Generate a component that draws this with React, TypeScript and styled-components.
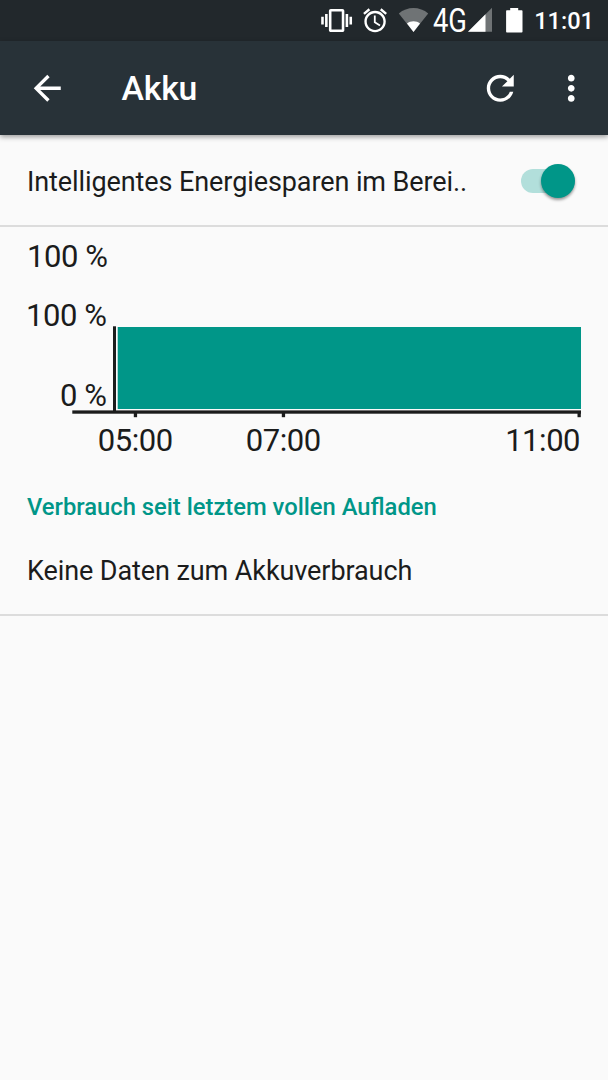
import React from 'react';
import styled, { createGlobalStyle } from 'styled-components';

const GlobalStyle = createGlobalStyle`
  body {
    margin: 0;
    background: #fafafa;
    color: #1b1c1c;
    font-family: Roboto, 'Liberation Sans', sans-serif;
  }
`;

const Screen = styled.div`
  width: 608px;
  height: 1080px;
  overflow: hidden;
  background: #fafafa;
`;

const StatusBar = styled.header`
  display: flex;
  align-items: flex-start;
  justify-content: flex-end;
  box-sizing: border-box;
  height: 41px;
  padding-right: 14px;
  background: #22282c;
`;

const StatusIcon = styled.svg<{ $gap: number }>`
  flex: none;
  display: block;
  margin-right: ${(p) => p.$gap}px;
  fill: #fff;
  overflow: visible;
`;

const Clock = styled.time`
  width: 60px;
  text-align: right;
  white-space: nowrap;
  font-size: 23.6px;
  font-weight: 500;
  line-height: 42px;
  color: #fff;
`;

const AppBar = styled.div`
  position: relative;
  display: flex;
  align-items: center;
  box-sizing: border-box;
  height: 94px;
  padding: 0 17px 0 27px;
  background: #283238;
  box-shadow: 0 2px 5px rgba(0, 0, 0, 0.38);
`;

const Title = styled.h1`
  flex: 1;
  margin: 0 0 0 54px;
  font-size: 33.8px;
  font-weight: 500;
  line-height: 40px;
  letter-spacing: -0.2px;
  padding-top: 2px;
  color: #fff;
`;

const BarIcon = styled.svg<{ $gap?: number }>`
  flex: none;
  width: 40.5px;
  height: 40.5px;
  margin-right: ${(p) => p.$gap ?? 0}px;
  fill: #fff;
`;

const SettingRow = styled.div`
  display: flex;
  align-items: center;
  justify-content: space-between;
  box-sizing: border-box;
  height: 92px;
  padding: 2px 31px 0 27px;
  border-bottom: 2px solid #dcdcdc;
`;

const Label = styled.span`
  padding-top: 2px;
  font-size: 27px;
  line-height: 32px;
  letter-spacing: -0.09px;
  white-space: nowrap;
`;

const Track = styled.div`
  display: flex;
  align-items: center;
  justify-content: flex-end;
  width: 54px;
  height: 24px;
  margin: -1px 2px 0 0;
  border-radius: 12px;
  background: #b2dfdb;
`;

const Thumb = styled.div`
  width: 34px;
  height: 34px;
  border-radius: 50%;
  background: #009688;
  box-shadow: 0 2px 3px rgba(0, 0, 0, 0.4);
`;

const Chart = styled.svg`
  display: block;
  font-size: 31px;
  letter-spacing: -0.45px;
  fill: #1b1c1c;
`;

const SectionTitle = styled.h2`
  margin: 0;
  padding: 26px 27px 0;
  font-size: 23.78px;
  font-weight: 500;
  line-height: 28px;
  color: #009688;
`;

const EmptyRow = styled.div`
  display: flex;
  align-items: center;
  box-sizing: border-box;
  height: 95px;
  padding: 4px 27px 0;
  border-bottom: 2px solid #dcdcdc;
`;

const ticks = [
  { time: '05:00', x: 135.5, anchor: 'middle' as const, labelX: 135.3 },
  { time: '07:00', x: 283.5, anchor: 'middle' as const, labelX: 283.3 },
  { time: '11:00', x: 579.2, anchor: 'end' as const, labelX: 580.1 },
];

function BatteryChart() {
  return (
    <Chart width="608" height="240" viewBox="0 227 608 240">
      <text x="27" y="267">100 %</text>
      <text x="106.5" y="326" textAnchor="end">100 %</text>
      <text x="106.5" y="405.6" textAnchor="end">0 %</text>
      <rect x="117.7" y="327" width="463.3" height="82" fill="#009688" />
      <rect x="113" y="326.3" width="3" height="86" />
      <rect x="72.3" y="410.4" width="508.7" height="3.3" />
      {ticks.map((t) => (
        <React.Fragment key={t.time}>
          <rect x={t.x - 1.7} y="413" width="3.3" height="4.2" />
          <text x={t.labelX} y="450.6" textAnchor={t.anchor}>{t.time}</text>
        </React.Fragment>
      ))}
    </Chart>
  );
}

export default function App() {
  return (
    <Screen>
      <GlobalStyle />
      <StatusBar>
        <StatusIcon $gap={11} width="31" height="41" viewBox="0 0 31 41">
          <path transform="translate(0.2 5.1) scale(1.285)" d="M0 15h2V9H0v6zm3 2h2V7H3v10zm19-8v6h2V9h-2zm-3 8h2V7h-2v10zM16.5 3h-9C6.67 3 6 3.67 6 4.5v15c0 .83.67 1.5 1.5 1.5h9c.83 0 1.5-.67 1.5-1.5v-15c0-.83-.67-1.5-1.5-1.5zM16 19H8V5h8v14z" />
        </StatusIcon>
        <StatusIcon $gap={11} width="25" height="41" viewBox="0 0 25 41">
          <path transform="translate(-2.2 6.1) scale(1.19)" d="M22 5.72l-4.6-3.86-1.29 1.53 4.6 3.86L22 5.72zM7.88 3.39L6.6 1.86 2 5.71l1.29 1.53 4.59-3.85zM12.5 8H11v6l4.75 2.85.75-1.23-4-2.37V8zM12 4c-4.97 0-9 4.03-9 9s4.02 9 9 9c4.97 0 9-4.03 9-9s-4.03-9-9-9zm0 16c-3.87 0-7-3.13-7-7s3.13-7 7-7 7 3.13 7 7-3.13 7-7 7z" />
        </StatusIcon>
        <StatusIcon $gap={4} width="30" height="41" viewBox="0 0 30 41">
          <path d="M-.2 13.6C8 6.2 21 6.2 29.2 13.6L14.5 32Z" fill="#6f7375" />
          <path d="M8 23.4C11.5 20.4 17.5 20.4 21 23.4L14.5 32Z" />
        </StatusIcon>
        <StatusIcon $gap={1} width="34" height="41" viewBox="0 0 34 41">
          <text x="0" y="32.2" fontSize="32.6" textLength="34" lengthAdjust="spacingAndGlyphs">4G</text>
        </StatusIcon>
        <StatusIcon $gap={14} width="24" height="41" viewBox="0 0 24 41">
          <path d="M0 31.7L24 7.8V31.7Z" fill="#6f7375" />
          <path d="M0 31.7L17.5 14.3V31.7Z" />
        </StatusIcon>
        <StatusIcon $gap={11} width="17" height="41" viewBox="0 0 17 41">
          <path d="M4.2 8h8v2.3h3.5q.8 0 .8 .8v20.6q0 .8-.8 .8h-14.8q-.8 0-.8-.8v-20.6q0-.8 .8-.8h3.3Z" />
        </StatusIcon>
        <Clock>11:01</Clock>
      </StatusBar>
      <AppBar>
        <BarIcon viewBox="0 0 24 24">
          <path d="M20 11H7.83l5.59-5.59L12 4l-8 8 8 8 1.41-1.41L7.83 13H20v-2z" />
        </BarIcon>
        <Title>Akku</Title>
        <BarIcon $gap={30.5} viewBox="0 0 24 24">
          <path d="M17.65 6.35C16.2 4.9 14.21 4 12 4c-4.42 0-7.99 3.58-7.99 8s3.57 8 7.99 8c3.73 0 6.84-2.55 7.73-6h-2.08c-.82 2.33-3.04 4-5.65 4-3.31 0-6-2.69-6-6s2.69-6 6-6c1.66 0 3.14.69 4.22 1.78L13 11h7V4l-2.35 2.35z" />
        </BarIcon>
        <BarIcon viewBox="0 0 24 24">
          <path d="M12 8c1.1 0 2-.9 2-2s-.9-2-2-2-2 .9-2 2 .9 2 2 2zm0 2c-1.1 0-2 .9-2 2s.9 2 2 2 2-.9 2-2-.9-2-2-2zm0 6c-1.1 0-2 .9-2 2s.9 2 2 2 2-.9 2-2-.9-2-2-2z" />
        </BarIcon>
      </AppBar>
      <SettingRow>
        <Label>Intelligentes Energiesparen im Berei..</Label>
        <Track><Thumb /></Track>
      </SettingRow>
      <BatteryChart />
      <SectionTitle>Verbrauch seit letztem vollen Aufladen</SectionTitle>
      <EmptyRow>
        <Label>Keine Daten zum Akkuverbrauch</Label>
      </EmptyRow>
    </Screen>
  );
}
